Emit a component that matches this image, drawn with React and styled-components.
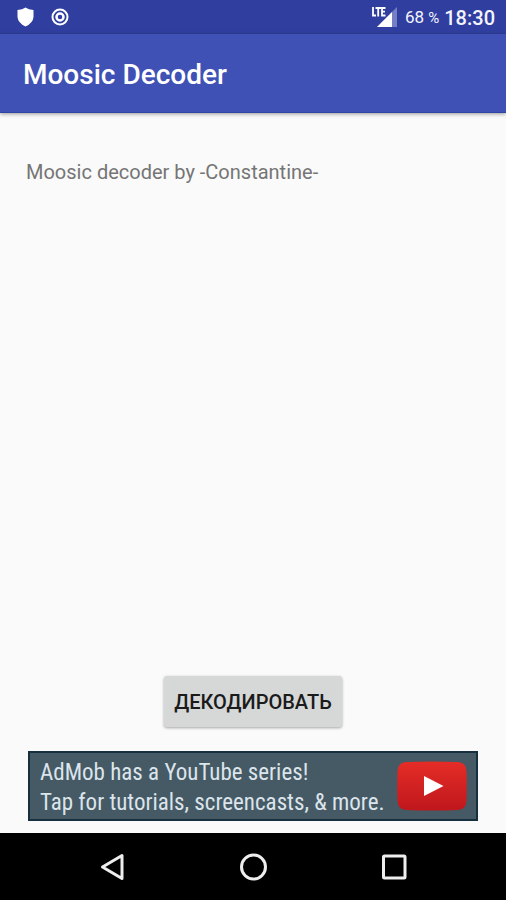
import React from "react";
import styled, { createGlobalStyle } from "styled-components";

const GlobalStyle = createGlobalStyle`
  * { box-sizing: border-box; }
  body {
    margin: 0;
    background: #fafafa;
    font-family: Roboto, "Noto Sans", sans-serif;
  }
`;

const Screen = styled.div`
  display: flex;
  flex-direction: column;
  min-height: 100vh;
`;

const StatusBar = styled.div`
  display: flex;
  align-items: center;
  justify-content: space-between;
  height: 34px;
  padding: 0 11px 0 16px;
  background: #303f9f;
  color: #f3f4fd;
`;

const StatusGroup = styled.div`
  display: flex;
  align-items: center;
  gap: ${({ $gap }) => $gap}px;
`;

const Battery = styled.span`
  padding-left: 2px;
  font-size: 17px;
  line-height: 20px;
`;

const Percent = styled.small`
  font-size: 15px;
`;

const Clock = styled.time`
  padding-top: 2px;
  font-size: 20px;
  font-weight: 500;
  line-height: 24px;
`;

const AppBar = styled.header`
  position: relative;
  display: flex;
  align-items: center;
  height: 79px;
  padding: 4px 23px 0;
  background: #3f51b5;
  border-bottom: 1px solid #2f45a5;
  box-shadow: 0 1px 4px rgba(0, 0, 0, 0.4);
`;

const Title = styled.h1`
  margin: 0;
  color: #fff;
  font-size: 28px;
  font-weight: 500;
  line-height: 36px;
`;

const Content = styled.main`
  flex: 1;
  display: flex;
  flex-direction: column;
  align-items: center;
  padding: 46px 26px 12px;
`;

const Credit = styled.p`
  margin: 0 0 auto;
  align-self: flex-start;
  color: #757575;
  font-size: 20px;
  line-height: 26px;
`;

const DecodeButton = styled.button`
  height: 51px;
  margin-bottom: 24px;
  padding: 0 10px;
  border: 0;
  border-radius: 3px;
  background: #d6d7d7;
  box-shadow: 0 1px 3px rgba(0, 0, 0, 0.35);
  color: #1b1b1b;
  font-family: inherit;
  font-size: 20px;
  font-weight: 500;
`;

const Banner = styled.a`
  display: flex;
  align-items: center;
  justify-content: space-between;
  width: calc(100% - 4px);
  height: 70px;
  padding: 0 9px 0 10px;
  border: 2px solid #16303f;
  background: #455a64;
  color: #dce4ec;
  text-decoration: none;
`;

const BannerText = styled.span`
  padding-top: 4px;
  font-family: "Roboto Condensed", Roboto, sans-serif;
  font-size: 23px;
  line-height: 30px;
  white-space: nowrap;
`;

const NavBar = styled.nav`
  display: flex;
  justify-content: center;
  align-items: center;
  gap: 100px;
  height: 67px;
  padding-left: 2px;
  background: #000;
`;

const NavButton = styled.button`
  display: grid;
  place-items: center;
  width: 40px;
  height: 40px;
  padding: 0;
  border: 0;
  background: none;
`;

const Icon = styled.svg`
  display: block;
  flex: none;
`;

const navIcons = [
  { label: "Back", shape: <path d="M23 3.500v23L3.500 15z" /> },
  { label: "Home", shape: <circle cx="14.500" cy="15" r="12" /> },
  { label: "Recent apps", shape: <rect x="4.500" y="4" width="21.500" height="22" rx="1" /> },
];

export default function App() {
  return (
    <>
      <GlobalStyle />
      <Screen>
        <StatusBar>
          <StatusGroup $gap={16}>
            <Icon width="19" height="20" viewBox="0 0 19 20" fill="#fff" aria-hidden="true">
              <path d="M9.500 0.500Q12.500 2.500 17.500 3V10Q17 16 9.500 19.500Q2 16 1.500 10V3Q6.500 2.500 9.500 0.500Z" />
            </Icon>
            <Icon width="18" height="18" viewBox="0 0 18 18" fill="none" stroke="#fff" aria-hidden="true">
              <circle cx="9" cy="9" r="7.500" strokeWidth="2" />
              <circle cx="9" cy="9" r="3.500" strokeWidth="2.500" />
            </Icon>
          </StatusGroup>
          <StatusGroup $gap={5}>
            <Icon width="27" height="22" viewBox="0 0 27 22" role="img" aria-label="LTE signal">
              <path d="M6 21 26 1V21Z" fill="#7480c4" />
              <path d="M6 21 21 6V21Z" fill="#fff" />
              <path d="M0 1H15V11H0Z" fill="#303f9f" />
              <path d="M2 1V9.500H5M4.500 2H10M7.200 2V10.500M14.500 2H11V9.500H14.500M11 5.700H14" fill="none" stroke="#fff" strokeWidth="1.800" />
            </Icon>
            <Battery>68 <Percent>%</Percent></Battery>
            <Clock>18:30</Clock>
          </StatusGroup>
        </StatusBar>
        <AppBar>
          <Title>Moosic Decoder</Title>
        </AppBar>
        <Content>
          <Credit>Moosic decoder by -Constantine-</Credit>
          <DecodeButton type="button">ДЕКОДИРОВАТЬ</DecodeButton>
          <Banner href="#youtube">
            <BannerText>
              AdMob has a YouTube series!
              <br />
              Tap for tutorials, screencasts, &amp; more.
            </BannerText>
            <Icon width="70" height="50" viewBox="0 0 70 50" aria-hidden="true">
              <defs>
                <linearGradient id="play" x1="0" y1="0" x2="0" y2="1">
                  <stop offset="0" stopColor="#e52d27" />
                  <stop offset="1" stopColor="#bf171d" />
                </linearGradient>
              </defs>
              <path d="M10 1Q35 0 60 1Q69 1 69.500 10Q70 25 69.500 40Q69 49 60 49Q35 50 10 49Q1 49 .5 40Q0 25 .5 10Q1 1 10 1Z" fill="url(#play)" />
              <path d="M27 15 46.500 25 27 35Z" fill="#fff" />
            </Icon>
          </Banner>
        </Content>
        <NavBar>
          {navIcons.map(({ label, shape }) => (
            <NavButton key={label} type="button" aria-label={label}>
              <Icon width="30" height="30" viewBox="0 0 30 30" fill="none" stroke="#eee" strokeWidth="3" strokeLinejoin="round">
                {shape}
              </Icon>
            </NavButton>
          ))}
        </NavBar>
      </Screen>
    </>
  );
}
